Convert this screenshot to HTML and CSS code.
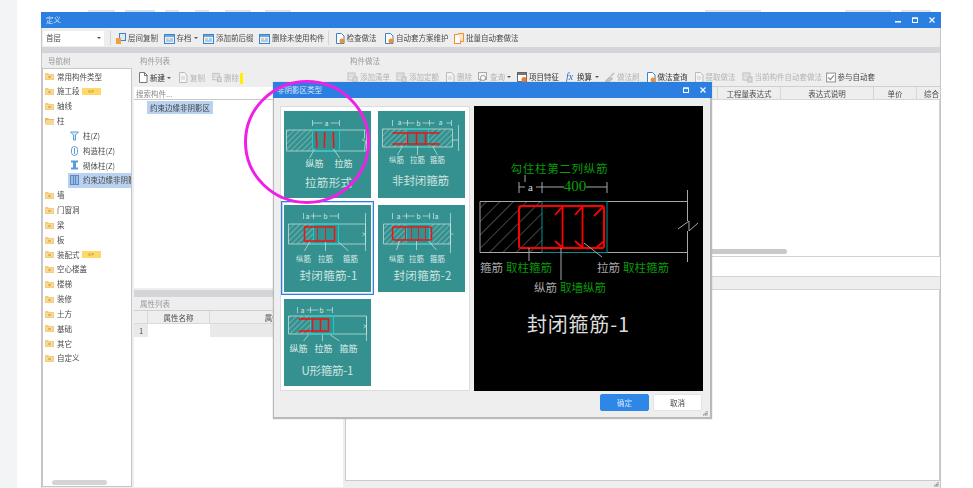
FILE: index.html
```html
<!DOCTYPE html>
<html lang="zh">
<head>
<meta charset="utf-8">
<title>定义</title>
<link rel="stylesheet" href="styles.css">
</head>
<body>
<svg class="defs" width="0" height="0" aria-hidden="true">
  <defs>
    <pattern id="hatch" width="4" height="4" patternUnits="userSpaceOnUse" patternTransform="rotate(45)"><line x1="0" y1="0" x2="0" y2="4" stroke="#c4dedb" stroke-width=".8"/></pattern>
    <pattern id="hatchB" width="9.500" height="9.500" patternUnits="userSpaceOnUse" patternTransform="rotate(45)"><line x1="0" y1="0" x2="0" y2="9.500" stroke="#c0c0c0" stroke-width=".7"/></pattern>
    <symbol id="folder" viewBox="0 0 9 8"><path d="M0 1h3l1 1h5v6H0z" fill="#f6cd7c"/><rect x="1" y="3" width="7" height="4" fill="#f3d99c"/><circle cx="4.500" cy="5" r="1.300" fill="#e5a93f"/></symbol>
    <symbol id="folderOpen" viewBox="0 0 9 8"><path d="M0 1h3l1 1h5v1H2L0 7z" fill="#e9b95e"/><path d="M2 3h7v5H0z" fill="#f6d695"/></symbol>
    <symbol id="win" viewBox="0 0 11 11"><rect x=".5" y="1.500" width="10" height="9" fill="#eaf2fb" stroke="#3c84c8"/><rect x="1" y="2" width="9" height="2" fill="#6fa6d8"/><rect x="2" y="5.500" width="3" height="1" fill="#f0a13c"/><rect x="6" y="5.500" width="3" height="1" fill="#6fa6d8"/><rect x="2" y="7.500" width="7" height="1" fill="#6fa6d8"/></symbol>
    <symbol id="doc" viewBox="0 0 10 11"><path d="M1.500.5h5l2.500 2.500v7.500h-7.500z" fill="#fff" stroke="#777"/><path d="M6.500.5v3h3" fill="none" stroke="#777"/></symbol>
    <symbol id="docOff" viewBox="0 0 10 11"><path d="M1.500.5h5l2.500 2.500v7.500h-7.500z" fill="#f4f4f4" stroke="#bbb"/><path d="M3 5h4M3 7h4" stroke="#ccc"/></symbol>
    <symbol id="docOrange" viewBox="0 0 10 11"><path d="M1.500.5h5l2.500 2.500v7.500h-7.500z" fill="#fff" stroke="#3c84c8"/><circle cx="7" cy="8" r="2.500" fill="#f0912c"/></symbol>
    <symbol id="listOff" viewBox="0 0 11 11"><rect x="1" y="1" width="7" height="7" fill="#eee" stroke="#bbb"/><rect x="6" y="5" width="4" height="5" fill="#ddd" stroke="#bbb"/><path d="M2 3h5M2 5h3" stroke="#ccc"/></symbol>
    <symbol id="grip" viewBox="0 0 6 6"><path d="M4 0h1.500v1.500H4zM2 2h1.500v1.500H2zM4 2h1.500v1.500H4zM0 4h1.500v1.500H0zM2 4h1.500v1.500H2zM4 4h1.500v1.500H4z" fill="#888"/></symbol>
  </defs>
</svg>

<div class="page">
  <div class="strip"></div>
  <div class="win-wrap">
    <div class="ghost"></div>
    <main class="win">
      <header class="title">
        <span class="title-text">定义</span>
        <span class="ctl">
          <svg class="ctl-i" viewBox="0 0 8 8"><rect x="1" y="5" width="6" height="1.500" fill="#fff"/></svg>
          <svg class="ctl-i" viewBox="0 0 8 8"><rect x="1.500" y="2" width="5" height="4.500" fill="none" stroke="#fff"/><rect x="1.500" y="1.500" width="5" height="1.200" fill="#fff"/></svg>
          <svg class="ctl-i" viewBox="0 0 8 8"><path d="M1.500 1.500l5 5M6.500 1.500l-5 5" stroke="#fff" stroke-width="1.200"/></svg>
        </span>
      </header>

      <div class="topbar">
        <div class="select"><span>首层</span><i class="arrow"></i></div>
        <i class="sep"></i>
        <div class="tool"><svg class="ic" viewBox="0 0 10 11"><rect x="3.500" y=".5" width="6" height="7" fill="#dbe9f7" stroke="#3c84c8"/><path d="M0 5h5v6H0z" fill="#f0a13c"/></svg><span>层间复制</span></div>
        <div class="tool"><svg class="ic w11"><use href="#win"/></svg><span>存档</span><i class="arrow"></i></div>
        <div class="tool"><svg class="ic w11"><use href="#win"/></svg><span>添加前后缀</span></div>
        <div class="tool"><svg class="ic w11"><use href="#win"/></svg><span>删除未使用构件</span></div>
        <i class="sep back"></i>
        <div class="tool"><svg class="ic"><use href="#docOrange"/></svg><span>检查做法</span></div>
        <div class="tool wide"><svg class="ic"><use href="#docOrange"/></svg><span>自动套方案维护</span></div>
        <div class="tool"><svg class="ic" viewBox="0 0 10 11"><rect x=".5" y="1.500" width="6" height="9" fill="#fff" stroke="#f0912c"/><path d="M4 .5h5.500v8H7" fill="#fbe4c6" stroke="#f0912c"/></svg><span>批量自动套做法</span></div>
      </div>
      <div class="band"></div>

      <div class="panels">
        <section class="nav">
          <div class="phead">导航树</div>
          <div class="navbody">
            <ul class="tree">
              <li><svg class="fold"><use href="#folder"/></svg>常用构件类型</li>
              <li><svg class="fold"><use href="#folder"/></svg>施工段<b class="vip">VIP</b></li>
              <li><svg class="fold"><use href="#folder"/></svg>轴线</li>
              <li><svg class="fold"><use href="#folderOpen"/></svg>柱</li>
              <li class="child"><svg class="kid" viewBox="0 0 9 10"><path d="M.5 1h8L5.500 4v5h-2V4z" fill="#dcecf9" stroke="#5d9bd5"/></svg>柱(Z)</li>
              <li class="child"><svg class="kid" viewBox="0 0 9 10"><rect x="1.500" y=".5" width="6" height="9" rx="3" fill="#fff" stroke="#5d9bd5"/><path d="M4.500 2v6" stroke="#5d9bd5"/></svg>构造柱(Z)</li>
              <li class="child"><svg class="kid" viewBox="0 0 9 10"><path d="M1 .5h7v2H6v5h2v2H1v-2h2v-5H1z" fill="#5d9bd5"/></svg>砌体柱(Z)</li>
              <li class="child on"><svg class="kid" viewBox="0 0 9 10"><rect x=".5" y=".5" width="8" height="9" fill="#9dbde4" stroke="#5d88c0"/><path d="M3.500 1v8M5.500 1v8" stroke="#5d88c0"/></svg>约束边缘非阴影区</li>
              <li><svg class="fold"><use href="#folder"/></svg>墙</li>
              <li><svg class="fold"><use href="#folder"/></svg>门窗洞</li>
              <li><svg class="fold"><use href="#folder"/></svg>梁</li>
              <li><svg class="fold"><use href="#folder"/></svg>板</li>
              <li><svg class="fold"><use href="#folder"/></svg>装配式<b class="vip">VIP</b></li>
              <li><svg class="fold"><use href="#folder"/></svg>空心楼盖</li>
              <li><svg class="fold"><use href="#folder"/></svg>楼梯</li>
              <li><svg class="fold"><use href="#folder"/></svg>装修</li>
              <li><svg class="fold"><use href="#folder"/></svg>土方</li>
              <li><svg class="fold"><use href="#folder"/></svg>基础</li>
              <li><svg class="fold"><use href="#folder"/></svg>其它</li>
              <li><svg class="fold"><use href="#folder"/></svg>自定义</li>
            </ul>
            <div class="hthumb"></div>
          </div>
        </section>

        <section class="list">
          <div class="phead">构件列表</div>
          <div class="bar lbar">
            <div class="tool"><svg class="ic"><use href="#doc"/></svg><span class="dark">新建</span><i class="arrow"></i></div>
            <div class="tool"><svg class="ic"><use href="#docOff"/></svg><span class="off">复制</span></div>
            <div class="tool"><svg class="ic"><use href="#listOff"/></svg><span class="off">删除</span></div>
            <i class="mark"></i>
          </div>
          <div class="search">搜索构件...</div>
          <div class="items"><span class="item">约束边缘非阴影区</span></div>
          <div class="band small"></div>
          <div class="phead attr-head">属性列表</div>
          <div class="attr">
            <div class="attr-row head"><span class="c0"></span><span class="c1">属性名称</span><span class="c2">属性值</span></div>
            <div class="attr-row"><span class="c0">1</span><span class="c1 blank"></span><span class="c2"></span></div>
          </div>
        </section>

        <section class="right">
          <div class="phead">构件做法</div>
          <div class="bar rbar">
            <div class="tool"><svg class="ic w11"><use href="#listOff"/></svg><span class="off">添加清单</span></div>
            <div class="tool"><svg class="ic w11"><use href="#listOff"/></svg><span class="off">添加定额</span></div>
            <div class="tool"><svg class="ic"><use href="#docOff"/></svg><span class="off">删除</span></div>
            <div class="tool"><svg class="ic" viewBox="0 0 10 11"><rect x=".5" y=".5" width="8" height="7" fill="#f4f4f4" stroke="#aaa"/><circle cx="5" cy="6" r="2.500" fill="#fff" stroke="#999"/><path d="M3 8l-2 2.500" stroke="#999"/></svg><span class="off">查询</span><i class="arrow"></i></div>
            <div class="tool"><svg class="ic" viewBox="0 0 10 11"><rect x=".5" y=".5" width="9" height="9" fill="#fff" stroke="#666"/><rect x="1" y="1" width="8" height="2" fill="#777"/><circle cx="7" cy="7.500" r="2.500" fill="#f0792c"/></svg><span class="dark">项目特征</span></div>
            <div class="tool fx"><i class="fx-i">fx</i><span class="dark">换算</span><i class="arrow"></i></div>
            <div class="tool"><svg class="ic" viewBox="0 0 10 11"><path d="M1 9l4-4 2 2-4 3zM6 4l3-3" stroke="#bbb" stroke-width="1.500" fill="#ccc"/></svg><span class="off">做法刷</span></div>
            <div class="tool"><svg class="ic"><use href="#docOrange"/></svg><span class="dark">做法查询</span></div>
            <div class="tool"><svg class="ic"><use href="#docOff"/></svg><span class="off">提取做法</span></div>
            <div class="tool"><svg class="ic w11"><use href="#listOff"/></svg><span class="off">当前构件自动套做法</span></div>
            <div class="tool chk"><svg class="ic" viewBox="0 0 9 10"><rect x=".5" y="1" width="8" height="8" fill="#fff" stroke="#999"/><path d="M2 5l2 2 3-4" fill="none" stroke="#888"/></svg><span>参与自动套</span></div>
          </div>
          <div class="thead">
            <span class="th t-hidden"></span>
            <span class="th t1">工程量表达式</span>
            <span class="th t2">表达式说明</span>
            <span class="th t3">单价</span>
            <span class="th t4">综合单价</span>
          </div>
          <div class="tbody"><div class="rthumb"></div></div>
          <div class="spacer"></div>
          <div class="lowhead"></div>
          <div class="lowbody"></div>
          <div class="foot"><svg class="grip"><use href="#grip"/></svg></div>
        </section>
      </div>
    </main>
  </div>
</div>

<div class="dialog">
  <header class="dtitle">
    <span>非阴影区类型</span>
    <span class="dctl">
      <svg class="ctl-i" viewBox="0 0 8 8"><rect x="1.500" y="2" width="5" height="4.500" fill="none" stroke="#fff"/><rect x="1.500" y="1.500" width="5" height="1.200" fill="#fff"/></svg>
      <svg class="ctl-i" viewBox="0 0 8 8"><path d="M1.500 1.500l5 5M6.500 1.500l-5 5" stroke="#fff" stroke-width="1.200"/></svg>
    </span>
  </header>
  <div class="dbody">
    <div class="pane">
      <div class="cell">
        <svg class="card" viewBox="0 0 86 87">
          <path class="w" d="M28 9v6M55 9v6M28 12h10M46 12h9"/><text class="dim" x="42" y="14.500">a</text>
          <rect class="hf" x="2" y="19" width="26" height="21"/>
          <path class="w" d="M2 19h80v21H2zM80 19v8l-2 2 3 1-1 10"/>
          <rect class="c" x="28" y="19" width="27" height="21"/>
          <path class="r" d="M32 21c-1 5 1 10 0 16M40 21c1 5-1 10 0 16M49 21c-1 5 1 10 0 16"/>
          <path class="w" d="M30 38l-5 9M49 38l6 9"/>
          <text class="lbl big" x="30" y="55.500">纵筋</text><text class="lbl big" x="59" y="55.500">拉筋</text>
          <text class="ttl" x="44" y="76" textLength="47">拉筋形式</text>
        </svg>
      </div>
      <div class="cell">
        <svg class="card" viewBox="0 0 86 87">
          <path class="w" d="M14 9v6M29 9v6M51 9v6M73 9v6M24 12h5M29 12h7M44 12h7M51 12h5M68 12h5"/>
          <text class="dim" x="21" y="14">a</text><text class="dim" x="40" y="14.500">b</text><text class="dim" x="62" y="14">a</text>
          <rect class="hf" x="4" y="18" width="24" height="18"/><rect class="hf" x="50" y="18" width="24" height="18"/>
          <path class="w" d="M4 18h70v18H4zM80 14v26M74 29h6"/>
          <rect class="c" x="28" y="18" width="22" height="18"/>
          <path class="r" d="M14 22h47M14 33h47M29 22v11M38 22v11M47 22v11"/>
          <path class="w" d="M24 35l-5 9M39 35v9M54 35l5 9"/>
          <text class="lbl" x="18" y="52">纵筋</text><text class="lbl" x="39" y="52">拉筋</text><text class="lbl" x="59" y="52">箍筋</text>
          <text class="ttl" x="42" y="74" textLength="57">非封闭箍筋</text>
        </svg>
      </div>
      <div class="cell sel">
        <svg class="card" viewBox="0 0 86 87">
          <path class="w" d="M19 8v6M29 8v6M54 8v6M26 11h3M29 11h8M45 11h9"/>
          <text class="dim" x="23" y="13.500">a</text><text class="dim" x="41" y="13.500">b</text>
          <rect class="hf" x="4" y="19" width="25" height="20"/>
          <path class="w" d="M4 19h77v20H4zM81 8v38M78 28l3 1-3 2"/>
          <rect class="c" x="29" y="19" width="25" height="20"/>
          <rect class="r" x="20" y="22" width="30" height="14"/><path class="r thin" d="M33 22v14M41 22v14"/>
          <path class="w" d="M25 37l-5 9M41 37v9M54 37l10 9"/>
          <text class="lbl" x="19" y="57">纵筋</text><text class="lbl" x="41" y="57">拉筋</text><text class="lbl" x="66" y="57">箍筋</text>
          <text class="ttl" x="44" y="75" textLength="58">封闭箍筋-1</text>
        </svg>
      </div>
      <div class="cell">
        <svg class="card" viewBox="0 0 86 87">
          <path class="w" d="M14 8v6M28 8v6M51 8v6M55 8v6M24 11h4M28 11h8M44 11h7"/>
          <text class="dim" x="20" y="13.500">a</text><text class="dim" x="40" y="13.500">b</text><text class="dim" x="58" y="13.500">a</text>
          <rect class="hf" x="5" y="19" width="23" height="20"/><rect class="hf" x="51" y="19" width="21" height="20"/>
          <path class="w" d="M5 19h67v20H5zM72 8v40M75 29h-3"/>
          <rect class="c" x="28" y="19" width="23" height="20"/>
          <rect class="r" x="14" y="22" width="39" height="13" rx="2"/><path class="r thin" d="M27 22v13M33 22v13M40 22v13M47 22v13"/>
          <path class="w" d="M21 36l-3 9M38 36v9M50 36l8 9"/>
          <text class="lbl" x="18" y="57">纵筋</text><text class="lbl" x="38" y="57">拉筋</text><text class="lbl" x="59" y="57">箍筋</text>
          <text class="ttl" x="44" y="75" textLength="58">封闭箍筋-2</text>
        </svg>
      </div>
      <div class="cell">
        <svg class="card" viewBox="0 0 86 87">
          <path class="w" d="M13 8v6M26 8v6M48 8v6M22 11h4M26 11h8M42 11h6"/>
          <text class="dim" x="18" y="13.500">a</text><text class="dim" x="37" y="13.500">b</text>
          <rect class="hf" x="4" y="17" width="22" height="18"/>
          <path class="w" d="M4 17h78v18H4zM82 17v25M79 26l3 1-3 2"/>
          <rect class="c" x="26" y="17" width="23" height="18"/>
          <path class="r" d="M14 20h30v12H14M28 20v12M36 20v12"/>
          <path class="w" d="M24 36l-5 6M38 36v6M46 36l9 6"/>
          <text class="lbl big" x="14" y="52.500">纵筋</text><text class="lbl big" x="39" y="52.500">拉筋</text><text class="lbl big" x="64" y="52.500">箍筋</text>
          <text class="ttl" x="43" y="76" textLength="52">U形箍筋-1</text>
        </svg>
      </div>
    </div>
    <div class="preview">
      <svg class="pv" viewBox="0 0 229 285">
        <text class="g" x="85" y="67" textLength="97">勾住柱第二列纵筋</text>
        <path class="pl" d="M51 69v7M45 76v11M68 76v11M133 76v11M45 81h6M62 81h6M68 81h22M112 81h21"/>
        <text class="pa" x="56.500" y="85">a</text>
        <text class="gnum" x="101" y="85">400</text>
        <rect x="6" y="95.500" width="62" height="51" fill="url(#hatchB)"/>
        <path class="pl" d="M6 95.500h207M6 146.500h207M6 95.500v51M213.500 84v31M213.500 125v31M204 123l11-8v10l9-8"/>
        <rect x="68" y="95.500" width="65" height="51" fill="none" stroke="#0d8d90" stroke-width="1"/>
        <rect x="45" y="100" width="85" height="42" rx="2" fill="none" stroke="#f00" stroke-width="2"/>
        <path class="pr" d="M88.500 100v42M108.500 100v42M81 109l8-9M101 109l8-9M120 110l9-9M81 135l8 7M101 135l8 7M122 142l8-7"/>
        <path class="pl" d="M55 142v13M87 142v32M110 137l18 14"/>
        <text class="lab" x="6" y="166">箍筋<tspan class="gt" dx="3">取柱箍筋</tspan></text>
        <text class="lab" x="123" y="166">拉筋<tspan class="gt" dx="3">取柱箍筋</tspan></text>
        <text class="lab" x="60" y="186">纵筋<tspan class="gt" dx="3">取墙纵筋</tspan></text>
        <text class="bigt" x="104" y="226" textLength="102">封闭箍筋-1</text>
      </svg>
    </div>
  </div>
  <div class="dfoot">
    <button class="btn primary" type="button">确定</button>
    <button class="btn" type="button">取消</button>
  </div>
  <svg class="dgrip"><use href="#grip"/></svg>
</div>

<svg class="ring" viewBox="0 0 128 128"><ellipse cx="64" cy="63" rx="61.500" ry="60.500" fill="none" stroke="#f01fe8" stroke-width="3"/></svg>
</body>
</html>
```

FILE: styles.css
```css
* { box-sizing: border-box; }
html, body { margin: 0; padding: 0; }
body {
  width: 973px; height: 488px; overflow: hidden; position: relative; background: #fff;
  font-family: "Noto Sans CJK SC", "Liberation Sans", sans-serif; font-size: 7.5px; line-height: 1; color: #4a4a4a;
}
.defs { position: absolute; }
.page { display: flex; height: 488px; filter: blur(.35px); }
.strip { width: 17px; background: #f3f4f6; flex: none; }
.win-wrap { margin-left: 24px; width: 900px; display: flex; flex-direction: column; }
.ghost {
  height: 12px; flex: none;
  background:
    linear-gradient(#e4e4e4,#e4e4e4) 47px 10px/27px 2px no-repeat,
    linear-gradient(#cfe0f5,#cfe0f5) 84px 10px/30px 2px no-repeat,
    linear-gradient(#e4e4e4,#e4e4e4) 124px 10px/14px 2px no-repeat,
    linear-gradient(#e4e4e4,#e4e4e4) 154px 10px/14px 2px no-repeat,
    linear-gradient(#e4e4e4,#e4e4e4) 184px 10px/26px 2px no-repeat,
    linear-gradient(#e4e4e4,#e4e4e4) 224px 10px/26px 2px no-repeat,
    linear-gradient(#e4e4e4,#e4e4e4) 664px 10px/56px 2px no-repeat,
    linear-gradient(#e4e4e4,#e4e4e4) 804px 10px/46px 2px no-repeat,
    linear-gradient(#e4e4e4,#e4e4e4) 860px 10px/30px 2px no-repeat;
}
.win { flex: 1; min-height: 0; display: flex; flex-direction: column; background: #eee; border-right: 1px solid #c4c6c9; border-left: 1px solid #c4c6c9; }

.title { height: 16px; flex: none; margin: 0 -1px; background: #2b7fe0; color: #cfe0f7; display: flex; align-items: center; justify-content: space-between; padding: 0 5px; }
.ctl { display: flex; gap: 9px; }
.ctl-i { width: 8px; height: 8px; display: block; }

.topbar { height: 18px; flex: none; margin-top: 1px; display: flex; align-items: center; padding-left: 1px; gap: 5.500px; background: #eee; }
.select { width: 61px; height: 15px; background: #fff; display: flex; align-items: center; justify-content: space-between; padding: 0 3px; }
.arrow { display: inline-block; width: 0; height: 0; border: 2px solid transparent; border-top: 2px solid #555; border-bottom: 0; flex: none; }
.sep { width: 1px; height: 14px; background: #d4d4d4; }
.sep.back { margin-left: -2px; }
.tool { display: flex; align-items: center; gap: 2px; white-space: nowrap; flex: none; }
.tool.wide { margin-left: 2px; }
.ic { width: 10px; height: 11px; flex: none; }
.ic.w11 { width: 11px; }
.band { height: 6px; flex: none; background: #d3d5d8; }
.band.small { height: 7px; margin-top: 2px; }

.panels { flex: 1; min-height: 0; display: flex; gap: 2px; padding-top: 1px; }
.nav { width: 90px; flex: none; display: flex; flex-direction: column; margin-bottom: 1px; }
.list { width: 209px; flex: none; display: flex; flex-direction: column; margin-bottom: 1px; }
.right { flex: 1; min-width: 0; display: flex; flex-direction: column; }
.phead { height: 14px; flex: none; color: #9a9a9a; padding: 3px 0 0 6px; background: #eee; }
.right > .phead { padding-left: 5px; }

.navbody { flex: 1; min-height: 0; background: #fff; border: 1px solid #c4c6c9; display: flex; flex-direction: column; justify-content: space-between; }
.tree { list-style: none; margin: 0; padding: 0; overflow: hidden; }
.tree li { height: 14.830px; display: flex; align-items: center; white-space: nowrap; padding-left: 2px; overflow: hidden; }
.fold { width: 9px; height: 8px; margin-right: 3px; flex: none; }
.tree .child { padding-left: 27px; }
.tree .child.on { background: #b9d2f0; margin-left: 25px; padding-left: 2px; }
.kid { width: 9px; height: 10px; margin-right: 4px; flex: none; }
.vip { display: block; width: 19px; height: 7px; margin-left: 2px; background: #ffd968; color: #b98a1e; font-size: 4px; font-weight: 400; text-align: center; line-height: 7px; }
.hthumb { width: 55px; height: 5px; margin: 0 0 1px 9px; background: #d4d4d4; border-radius: 3px; flex: none; }

.bar { height: 19px; flex: none; display: flex; align-items: center; background: #eee; padding-left: 4px; position: relative; }
.lbar { gap: 7px; }
.off { color: #b4b4b4; }
.dark { color: #333; }
.mark { width: 3px; height: 11px; background: #ffef00; margin-left: -6px; margin-top: 2px; }
.search { height: 13px; flex: none; background: #fff; border-bottom: 1px solid #c9c9c9; color: #888; padding: 3px 0 0 2px; }
.items { height: 188px; flex: none; background: #fff; padding: 1px 0 0 13px; }
.item { display: inline-block; height: 13px; padding: 3px 3px 0; background: #b9d2f0; color: #444; }
.attr-head { border-bottom: 1px solid #cfcfcf; }
.attr { flex: 1; min-height: 0; background: #fff; }
.attr-row { height: 13px; display: flex; align-items: center; }
.attr-row span { height: 13px; display: block; text-align: center; padding-top: 3px; background: #e9e9e9; }
.attr-row.head span { background: #eee; border-right: 1px solid #d9d9d9; border-bottom: 1px solid #d9d9d9; }
.c0 { width: 14px; flex: none; }
.c1 { width: 62px; flex: none; }
.c2 { flex: 1; }
.attr-row .blank { background: #fff; }

.rbar { gap: 6px; padding-left: 2px; border-bottom: 1px solid #d0d0d0; }
.rbar .tool.fx { gap: 3px; margin-left: 1px; }
.rbar .tool.chk { margin-left: -2.500px; }
.fx-i { font-family: "Liberation Serif", serif; font-style: italic; font-size: 10px; color: #2e6fb8; width: 8px; }
.thead { height: 13px; flex: none; display: flex; background: #eee; border-bottom: 1px solid #d6d6d6; overflow: hidden; }
.th { display: block; flex: none; text-align: center; padding-top: 3px; border-right: 1px solid #d6d6d6; white-space: nowrap; overflow: hidden; }
.t-hidden { width: 373px; }
.t1 { width: 63px; }
.t2 { width: 93px; }
.t3 { width: 43px; }
.t4 { width: 22px; border: 0; text-align: left; padding-left: 7px; }
.tbody { height: 157px; flex: none; background: #fff; border: 1px solid #d2d2d2; border-top: 0; position: relative; display: flex; align-items: flex-end; padding: 0 0 2px 299px; }
.rthumb { width: 142px; height: 5px; background: #c9c9c9; border-radius: 3px; }
.spacer { height: 19px; flex: none; background: #fff; }
.lowhead { height: 14px; flex: none; background: #eee; border-top: 1px solid #d4d4d4; border-bottom: 1px solid #d4d4d4; }
.lowbody { flex: 1; min-height: 0; background: #fff; border: 1px solid #c9cbce; border-top: 0; }
.foot { height: 7px; flex: none; display: flex; justify-content: flex-end; align-items: center; padding-right: 1px; }
.grip { width: 5px; height: 5px; }

/* dialog floats over the window */
.dialog { position: absolute; left: 273px; top: 82px; width: 439px; height: 337px; background: #eee; border: 1px solid #b6b9bd; border-width: 0 2px 2px 1px; filter: blur(.35px); box-shadow: 0 0 1px #aaa; }
.dtitle { height: 16px; margin: 0 -2px 0 -1px; background: #2b7fe0; color: #d5e4f8; display: flex; align-items: center; justify-content: space-between; padding: 0 5px 0 4px; }
.dctl { display: flex; gap: 9px; }
.dbody { display: flex; gap: 4px; padding: 8px 7px 0 6px; }
.pane { width: 190px; height: 285px; background: #fff; border: 1px solid #dcdcdc; display: grid; grid-template-columns: 93px 95px; grid-auto-rows: 94px; align-content: start; }
.cell { display: flex; align-items: center; justify-content: center; }
.cell:nth-child(-n+2) { height: 95px; }
.cell.sel { outline: 1px solid #2e7fe0; outline-offset: -1px; box-shadow: inset 0 0 0 2px #bcd6f4; }
.card { width: 87px; height: 87px; display: block; background: #35918f; flex: none; }
.w { fill: none; stroke: #cfe6e3; stroke-width: .7; }
.hf { fill: url(#hatch); }
.c { fill: none; stroke: #19cfd0; stroke-width: .9; }
.r { fill: none; stroke: #f01212; stroke-width: 1.500; }
.r.thin { stroke-width: 1; stroke: #c92a2a; }
.dim { fill: #dcecea; font-size: 6.500px; text-anchor: middle; }
.lbl { fill: #dbeae8; font-size: 7.500px; text-anchor: middle; }
.lbl.big { font-size: 9px; }
.ttl { fill: #cfe3e1; font-size: 11.500px; text-anchor: middle; }
.preview { width: 229px; height: 285px; background: #000; }
.pv { width: 229px; height: 285px; display: block; font-family: "Noto Sans CJK SC", serif; }
.g { fill: #0a9a0a; font-size: 11.500px; text-anchor: middle; }
.gnum { fill: #0ca00c; font-size: 15px; text-anchor: middle; font-family: "Liberation Serif", serif; }
.pa { fill: #ddd; font-size: 11px; text-anchor: middle; font-family: "Liberation Serif", serif; }
.pl { fill: none; stroke: #a8a8a8; stroke-width: 1; }
.pr { fill: none; stroke: #f00; stroke-width: 1.800; }
.lab { fill: #a8a8a8; font-size: 11.500px; }
.gt { fill: #0a9a0a; }
.bigt { fill: #dcdcdc; font-size: 20px; text-anchor: middle; }
.dfoot { display: flex; justify-content: flex-end; gap: 4px; padding: 3px 8px 0 0; }
.btn { width: 49px; height: 17px; padding: 0; border: 1px solid #e3e3e3; background: #fff; border-radius: 2px; font: inherit; color: #444; }
.btn.primary { background: #2e86e6; border-color: #2e86e6; color: #cfe4fb; }
.dgrip { position: absolute; right: 2px; bottom: 1px; width: 5px; height: 5px; }

/* hand-drawn annotation over the screenshot */
.ring { position: absolute; left: 243px; top: 79px; width: 128px; height: 128px; filter: blur(.35px); }
```
